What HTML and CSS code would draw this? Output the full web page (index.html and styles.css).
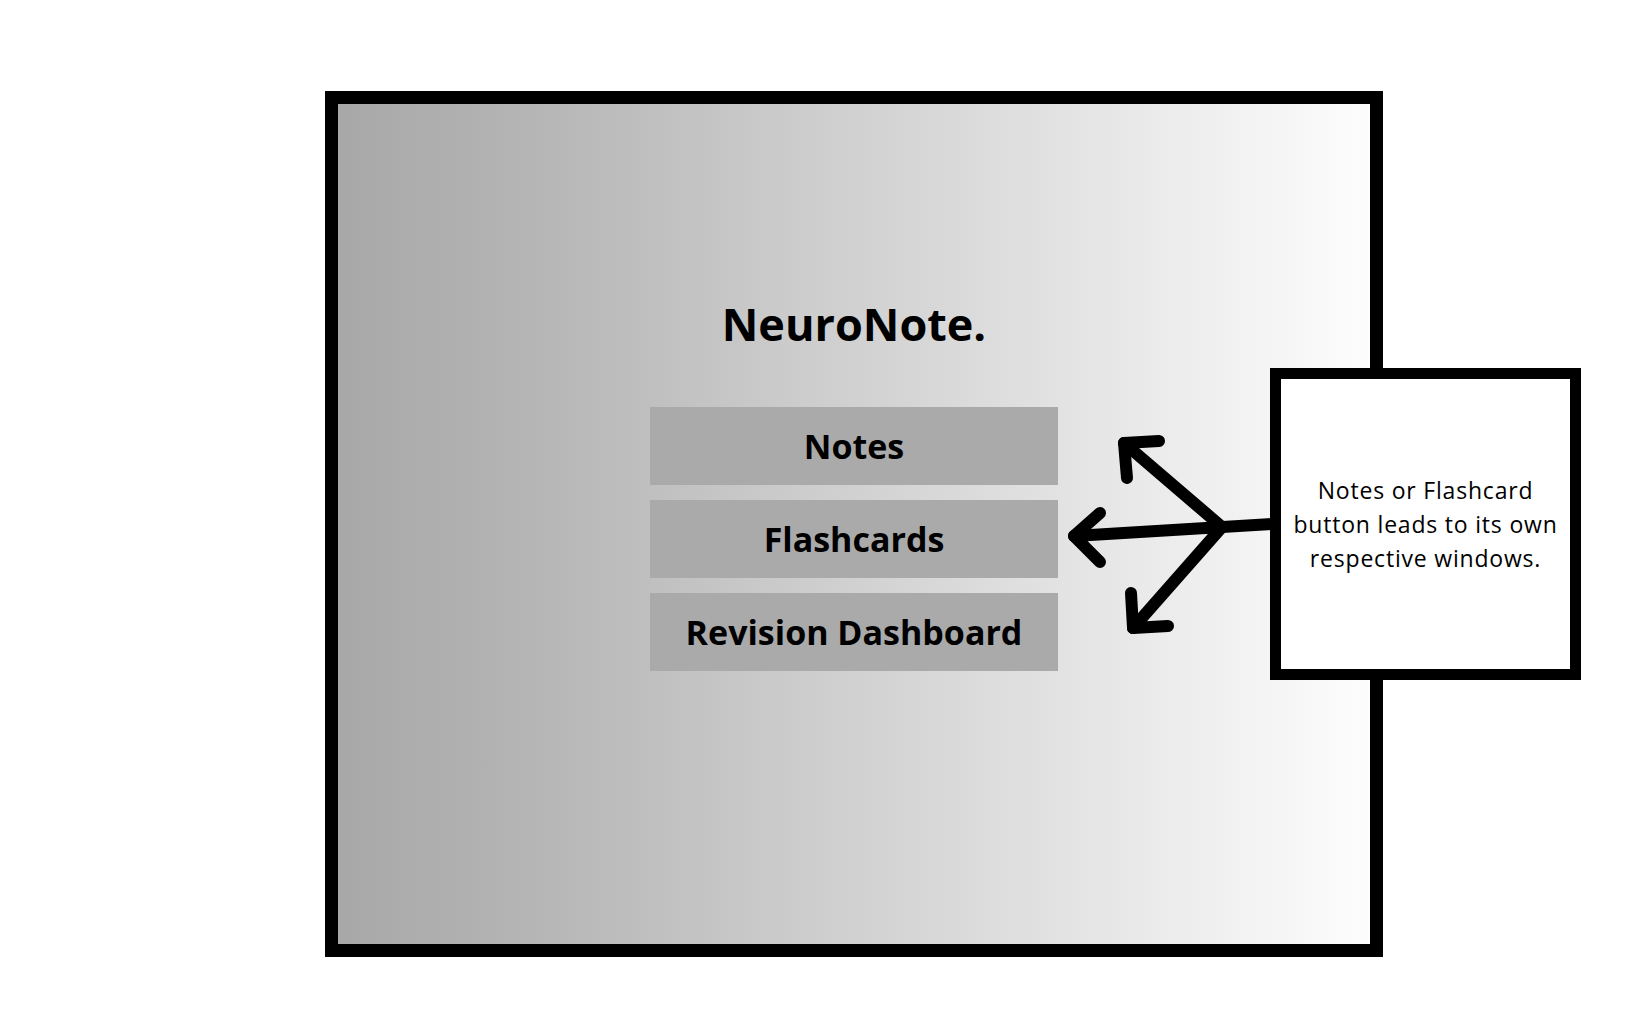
FILE: index.html
```html
<!DOCTYPE html>
<html lang="en">
<head>
  <meta charset="UTF-8">
  <meta name="viewport" content="width=device-width, initial-scale=1.0">
  <title>NeuroNote. - Home</title>
  <link rel="stylesheet" href="styles.css">
</head>
<body>
  <div class="page">
    <!-- Main window -->
    <div class="window">
      <h1 class="title">NeuroNote.</h1>
      <div class="menu">
        <button class="menu-btn">Notes</button>
        <button class="menu-btn">Flashcards</button>
        <button class="menu-btn">Revision Dashboard</button>
      </div>
    </div>

    <!-- Annotation arrows -->
    <svg class="arrows" width="1652" height="1030" viewBox="0 0 1652 1030">
      <g fill="none" stroke="#000" stroke-width="12" stroke-linecap="round" stroke-linejoin="round">
        <path d="M1272 524 L1074 536"/>
        <path d="M1100 513 L1074 536 L1100 562"/>
        <path d="M1222 527 L1124 443"/>
        <path d="M1159 441 L1124 443 L1127 478"/>
        <path d="M1222 527 L1133 628"/>
        <path d="M1131 593 L1133 628 L1168 626"/>
      </g>
    </svg>

    <!-- Annotation note -->
    <div class="note">
      <p>Notes or Flashcard button leads to its own respective windows.</p>
    </div>
  </div>
</body>
</html>
```

FILE: styles.css
```css
body {
  margin: 0;
  background-color: #fff;
  font-family: "Open Sans", "Noto Sans", sans-serif;
  color: #000;
}

.page {
  position: relative;
  width: 1652px;
  height: 1030px;
  padding: 91px 0 0 325px;
  box-sizing: border-box;
}

.window {
  width: 1058px;
  height: 866px;
  box-sizing: border-box;
  border: 13px solid #000;
  background: linear-gradient(to right, #a8a8a8 0%, #b2b2b2 15%, #fdfdfd 100%);
  display: flex;
  flex-direction: column;
  align-items: center;
  padding-top: 196px;
}

.title {
  margin: 0;
  font-size: 45px;
  line-height: 48px;
  font-weight: 700;
}

.menu {
  margin-top: 59px;
  display: flex;
  flex-direction: column;
  gap: 15px;
}

.menu-btn {
  width: 408px;
  height: 78px;
  border: none;
  padding: 0;
  background-color: #aaaaaa;
  font-family: inherit;
  font-size: 34px;
  font-weight: 700;
  color: #000;
}

.arrows {
  position: absolute;
  top: 0;
  left: 0;
}

.note {
  position: absolute;
  left: 1270px;
  top: 368px;
  width: 311px;
  height: 312px;
  box-sizing: border-box;
  border: 11px solid #000;
  background-color: #fff;
  display: flex;
  align-items: center;
  justify-content: center;
}

.note p {
  margin: 0;
  padding: 0 4px;
  text-align: center;
  font-size: 23px;
  line-height: 34px;
  letter-spacing: 0.8px;
}
```
